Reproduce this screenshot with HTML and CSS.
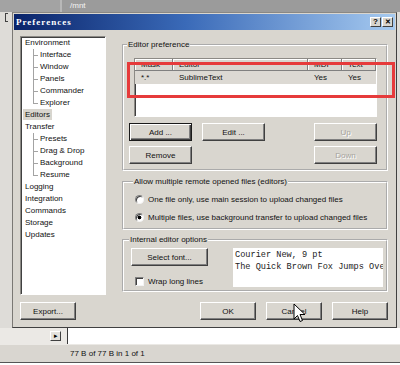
FILE: index.html
```html
<!DOCTYPE html>
<html lang="en">
<head>
  <meta charset="UTF-8">
  <title>Preferences</title>
  <link rel="stylesheet" href="styles.css">
</head>
<body>
  <div class="pathbar">
    <div class="pathbar-left"></div>
    <div class="pathbar-path">/mnt</div>
  </div>

  <div class="workspace">
    <div class="gutter"><span class="grip"></span></div>

    <div class="dialog">
      <div class="titlebar">
        <span class="title">Preferences</span>
        <span class="caption-btn">?</span>
        <span class="caption-btn close">&#x2715;</span>
      </div>

      <div class="dialog-body">
        <div class="main">
          <!-- left navigation tree -->
          <ul class="tree">
            <li>Environment
              <ul class="sub">
                <li>Interface</li>
                <li>Window</li>
                <li>Panels</li>
                <li>Commander</li>
                <li class="last">Explorer</li>
              </ul>
            </li>
            <li><span class="selected">Editors</span></li>
            <li>Transfer
              <ul class="sub">
                <li>Presets</li>
                <li>Drag &amp; Drop</li>
                <li>Background</li>
                <li class="last">Resume</li>
              </ul>
            </li>
            <li>Logging</li>
            <li>Integration</li>
            <li>Commands</li>
            <li>Storage</li>
            <li>Updates</li>
          </ul>

          <div class="pane">
            <fieldset class="group group-editors">
              <legend>Editor preference</legend>
              <div class="listview">
                <div class="lv-row lv-header">
                  <span>Mask</span><span>Editor</span><span>MDI</span><span>Text</span>
                </div>
                <div class="lv-row lv-item">
                  <span>*.*</span><span>SublimeText</span><span>Yes</span><span>Yes</span>
                </div>
              </div>
              <div class="editor-buttons">
                <button class="btn default">Add ...</button>
                <button class="btn">Edit ...</button>
                <button class="btn col-right" disabled>Up</button>
                <button class="btn">Remove</button>
                <button class="btn col-right" disabled>Down</button>
              </div>
            </fieldset>

            <fieldset class="group group-multi">
              <legend>Allow multiple remote opened files (editors)</legend>
              <label class="option"><span class="radio"></span>One file only, use main session to upload changed files</label>
              <label class="option"><span class="radio checked"></span>Multiple files, use background transfer to upload changed files</label>
            </fieldset>

            <fieldset class="group group-internal">
              <legend>Internal editor options</legend>
              <div class="internal-grid">
                <div class="internal-left">
                  <button class="btn">Select font...</button>
                  <label class="option wrap"><span class="checkbox"></span>Wrap long lines</label>
                </div>
                <div class="font-preview">
                  <div>Courier New, 9 pt</div>
                  <div>The Quick Brown Fox Jumps Over The Lazy Dog</div>
                </div>
              </div>
            </fieldset>
          </div>
        </div>

        <div class="dialog-buttons">
          <button class="btn">Export...</button>
          <span class="spacer"></span>
          <button class="btn">OK</button>
          <button class="btn">Cancel</button>
          <button class="btn">Help</button>
        </div>
      </div>
    </div>
  </div>

  <div class="cmdrow">
    <div class="cmd-left"><span class="mini-btn">&#x25B8;</span></div>
    <div class="cmd-field"></div>
  </div>
  <div class="statusbar">77 B of 77 B in 1 of 1</div>

  <!-- annotation and mouse pointer drawn over the screenshot -->
  <div class="highlight-box"></div>
  <svg class="pointer" width="13" height="20" viewBox="0 0 13 20">
    <path d="M1 1 L1 16 L4.5 12.5 L7 18.5 L9.5 17.5 L7 11.5 L12 11.5 Z" fill="#fff" stroke="#000" stroke-width="1"/>
  </svg>
</body>
</html>
```

FILE: styles.css
```css
* {
  box-sizing: border-box;
}

body {
  margin: 0;
  width: 400px;
  height: 365px;
  overflow: hidden;
  position: relative;
  background: #fff;
  font-family: "Liberation Sans", Arial, sans-serif;
  font-size: 8px;
  color: #111;
}

/* ---- main window behind the dialog ---- */

.pathbar {
  display: flex;
  height: 12px;
  background: #9b9b9b;
}

.pathbar-left {
  width: 62px;
  border-right: 2px solid #b8b8b8;
  background: #a3a3a3;
}

.pathbar-path {
  flex: 1;
  padding-left: 8px;
  line-height: 11px;
  color: #f4f4f4;
}

.workspace {
  display: flex;
  height: 316px;
  background: #dedcd8;
}

.gutter {
  width: 12px;
  padding: 1px 0 0 5px;
}

.grip {
  display: block;
  width: 3px;
  height: 9px;
  border-left: 1px solid #404040;
  border-top: 1px solid #404040;
  border-bottom: 1px solid #404040;
}

.cmdrow {
  display: flex;
  height: 16px;
  background: #fff;
}

.cmd-left {
  width: 68px;
  padding: 3px 0 0 50px;
  background: #ebe9e5;
  border-right: 1px solid #3a3a3a;
}

.mini-btn {
  display: block;
  width: 11px;
  height: 10px;
  background: #e4e2dd;
  border: 1px solid;
  border-color: #fff #404040 #404040 #fff;
  font-size: 7px;
  line-height: 8px;
  text-align: center;
  color: #000;
}

.cmd-field {
  flex: 1;
  background: #fff;
}

.statusbar {
  height: 19px;
  padding-left: 70px;
  line-height: 17px;
  background: #d9d6d0;
  border-top: 1px solid #ebe9e5;
  border-bottom: 1px solid #555;
}

/* ---- dialog window ---- */

.dialog {
  width: 385px;
  padding: 1px;
  background: #d9d6cf;
  border: 1px solid;
  border-color: #8a8884 #404040 #404040 #7a7874;
}

.titlebar {
  display: flex;
  align-items: center;
  gap: 1px;
  height: 16px;
  padding: 0 2px 0 2px;
  background: linear-gradient(to right, #0a246a, #3a6ab8 45%, #a6caf0);
}

.title {
  flex: 1;
  font-family: "Liberation Serif", "Times New Roman", serif;
  font-weight: bold;
  font-size: 9px;
  letter-spacing: 1px;
  color: #fff;
}

.caption-btn {
  width: 11px;
  height: 10px;
  background: #d9d6cf;
  border: 1px solid;
  border-color: #fff #404040 #404040 #fff;
  font-weight: bold;
  font-size: 8px;
  line-height: 8px;
  text-align: center;
  color: #000;
}

.caption-btn.close {
  font-size: 7px;
}

.dialog-body {
  padding: 6px 7px 6px 6px;
}

.main {
  display: grid;
  grid-template-columns: 86px 266px;
  column-gap: 16px;
  height: 259px;
}

/* ---- tree ---- */

.tree,
.tree ul {
  list-style: none;
  margin: 0;
  padding: 0;
}

.tree {
  background: #fff;
  border: 1px solid;
  border-color: #8c8a85 #fff #fff #8c8a85;
  box-shadow: inset 1px 1px #404040;
}

.tree li {
  line-height: 12px;
  padding-left: 4px;
  white-space: nowrap;
}

.tree .sub {
  margin-left: -4px;
}

.tree .sub li {
  padding-left: 19px;
  background-image: linear-gradient(#a3a3a3, #a3a3a3), linear-gradient(#a3a3a3, #a3a3a3);
  background-size: 1px 100%, 5px 1px;
  background-position: 12px 0, 12px 6px;
  background-repeat: no-repeat;
}

.tree .sub li.last {
  background-size: 1px 7px, 5px 1px;
}

.selected {
  display: inline-block;
  margin-left: -2px;
  padding: 0 2px;
  line-height: 11px;
  background: #d8d5ce;
}

/* ---- group boxes ---- */

.pane {
  padding-top: 4px;
}

.group {
  min-width: 0;
  margin: 0;
  border: 2px groove #fff;
}

.group legend {
  margin-left: -2px;
  padding: 0 1px;
  line-height: 10px;
}

.group-editors {
  padding: 8px 9px 5px 5px;
}

.group-multi {
  margin-top: 6px;
  padding: 6px 5px 5px 11px;
}

.group-internal {
  margin-top: 5px;
  padding: 3px 3px 3px 7px;
}

/* ---- list view ---- */

.listview {
  height: 59px;
  margin-left: 5px;
  background: #fff;
  border: 1px solid;
  border-color: #8c8a85 #fff #fff #8c8a85;
  box-shadow: inset 1px 1px #404040;
}

.lv-row {
  display: grid;
  grid-template-columns: 38px 135px 34px 34px;
}

.lv-header span {
  height: 12px;
  padding-left: 6px;
  line-height: 11px;
  background: #d9d6cf;
  border-right: 1px solid #808080;
  border-bottom: 1px solid #808080;
  box-shadow: inset 1px 1px #fff;
}

.lv-item {
  background: #dcd9d3;
}

.lv-item span {
  height: 13px;
  padding-left: 6px;
  line-height: 13px;
}

/* ---- buttons ---- */

.btn {
  height: 18px;
  padding: 0;
  font-family: inherit;
  font-size: 8px;
  color: #111;
  background: #d9d6cf;
  border: 1px solid;
  border-color: #fff #404040 #404040 #fff;
  box-shadow: inset -1px -1px #808080;
}

.btn.default {
  border-color: #1a1a1a;
  box-shadow: inset 1px 1px #fff, inset -1px -1px #404040, inset -2px -2px #808080;
}

.btn:disabled {
  color: #a5a29c;
  text-shadow: 1px 1px #fff;
}

.editor-buttons {
  display: grid;
  grid-template-columns: 63px 63px 1fr 63px;
  gap: 5px 10px;
  margin-top: 6px;
}

.col-right {
  grid-column: 4;
}

.dialog-buttons {
  display: flex;
  gap: 10px;
  margin-top: 7px;
}

.dialog-buttons .btn {
  width: 56px;
}

.spacer {
  flex: 1;
}

/* ---- radio / checkbox ---- */

.option {
  display: flex;
  align-items: center;
  gap: 4px;
  height: 12px;
  white-space: nowrap;
}

.group-multi .option + .option {
  margin-top: 6px;
}

.radio,
.checkbox {
  flex: none;
  width: 9px;
  height: 9px;
  background: #fff;
  border: 1px solid;
  border-color: #808080 #f4f4f4 #f4f4f4 #808080;
  box-shadow: inset 1px 1px #404040;
}

.radio {
  border-radius: 50%;
}

.radio.checked {
  background: radial-gradient(circle, #000 0 1.6px, #fff 2.2px);
}

/* ---- internal editor ---- */

.internal-grid {
  display: grid;
  grid-template-columns: 77px 150px;
  column-gap: 25px;
}

.internal-left .btn {
  width: 77px;
}

.option.wrap {
  margin: 9px 0 0 4px;
}

.font-preview {
  height: 39px;
  padding: 1px 0 0 2px;
  overflow: hidden;
  white-space: nowrap;
  background: #fff;
  font-family: "Liberation Mono", "Courier New", monospace;
  font-size: 8.6px;
  line-height: 12px;
  color: #222;
}

/* ---- overlays ---- */

.highlight-box {
  position: absolute;
  left: 127px;
  top: 62px;
  width: 268px;
  height: 36px;
  border: 3px solid #e63b3b;
}

.pointer {
  position: absolute;
  left: 293px;
  top: 303px;
}
```
